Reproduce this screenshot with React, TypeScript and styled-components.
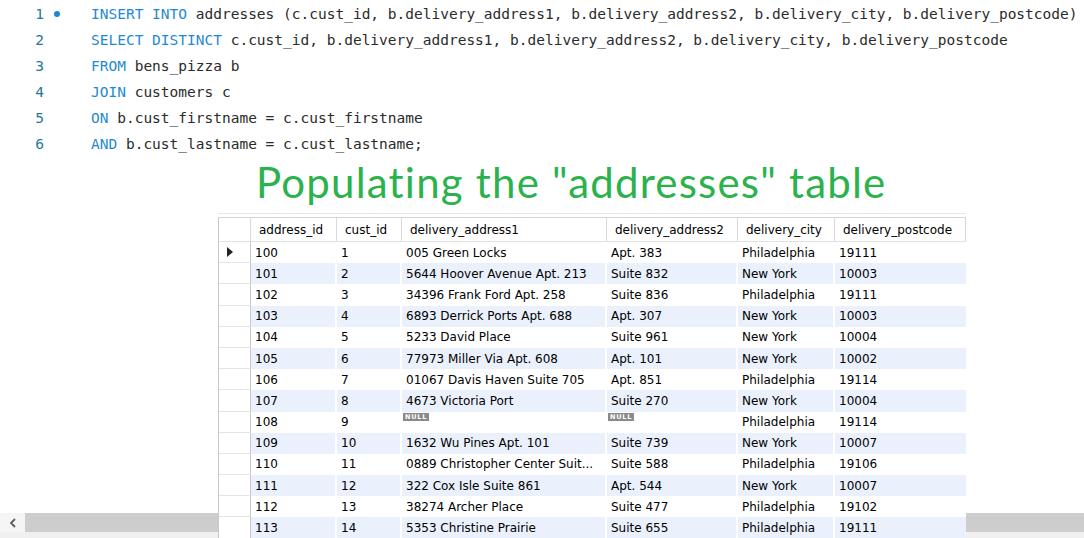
import styled, { createGlobalStyle } from 'styled-components';

const GlobalStyle = createGlobalStyle`
  html, body {
    margin: 0;
    padding: 0;
    background: #fff;
    overflow: hidden;
  }
`;

const COLS = '32px 86px 65px 205px 131px 97px 132px';

const Editor = styled('div')`
  position: relative;
  width: 1084px;
  height: 538px;
  overflow: hidden;
  background: #fff;
`;

const Code = styled('div')`
  padding-top: 1px;
  font-family: 'DejaVu Sans Mono', 'Liberation Mono', monospace;
  font-size: 14.5px;
  color: #2b2b2b;
`;

const Line = styled('div')`
  display: grid;
  grid-template-columns: 44px 47px 1fr;
  align-items: center;
  height: 26px;
  white-space: pre;
`;

const LineNo = styled('span')`
  text-align: right;
  color: #237893;
`;

const Gutter = styled('span')`
  display: flex;
  align-items: center;
  padding-left: 10px;
`;

const Dot = styled('span')`
  width: 6px;
  height: 6px;
  border-radius: 50%;
  background: #1b85d8;
`;

const Kw = styled('span')`
  color: #1f8ad2;
`;

const Title = styled('h1')`
  margin: 0 0 0 256px;
  height: 56px;
  font-family: Lato, 'Open Sans', sans-serif;
  font-weight: 400;
  font-size: 42px;
  letter-spacing: 1.2px;
  line-height: 50px;
  color: #2bb24c;
`;

const Grid = styled('div')`
  position: relative;
  z-index: 1;
  margin-left: 218px;
  width: 748px;
  border-top: 1px solid #e6e6e6;
  padding-top: 3px;
  background: #fff;
  font-family: 'DejaVu Sans', Verdana, sans-serif;
  font-size: 12px;
  color: #000;
`;

const HeaderRow = styled('div')`
  display: grid;
  grid-template-columns: ${COLS};
  height: 25px;
  border-top: 1px solid #d6d6d6;
  border-bottom: 1px solid #e2e2e2;
  border-left: 1px solid #c8c8c8;
  border-right: 1px solid #d6d6d6;
  box-sizing: border-box;
`;

const HeadCell = styled('div')`
  display: flex;
  align-items: center;
  padding-left: 8px;
  border-right: 1px solid #dadada;
  white-space: nowrap;
  &:last-child {
    border-right: none;
  }
`;

const Row = styled('div')<{ $alt: boolean }>`
  display: grid;
  grid-template-columns: ${COLS};
  height: 21.2px;
  border-left: 1px solid #c8c8c8;
  box-sizing: border-box;
  background: ${(p) => (p.$alt ? '#eaf1fc' : '#fff')};
`;

const Selector = styled('div')`
  display: flex;
  align-items: center;
  padding-left: 8px;
  background: #fff;
  border-right: 1px solid #c8c8c8;
  border-bottom: 1px solid #e4e4e4;
`;

const Arrow = styled('span')`
  width: 0;
  height: 0;
  border-top: 5px solid transparent;
  border-bottom: 5px solid transparent;
  border-left: 6px solid #222;
`;

const Cell = styled('div')<{ $top?: boolean }>`
  display: flex;
  align-items: ${(p) => (p.$top ? 'flex-start' : 'center')};
  padding: ${(p) => (p.$top ? '1px 0 0 1px' : '0 0 0 4px')};
  border-right: 2px solid #fff;
  white-space: nowrap;
  overflow: hidden;
  &:last-child {
    border-right: none;
  }
`;

const NullTag = styled('span')`
  display: inline-block;
  padding: 0 2px;
  height: 8px;
  line-height: 8px;
  background: #8a8a8a;
  color: #fff;
  font-family: 'DejaVu Sans', sans-serif;
  font-size: 6.5px;
  font-weight: 700;
  letter-spacing: 0.8px;
`;

const Scrollbar = styled('div')`
  position: absolute;
  left: 0;
  right: 0;
  top: 513px;
  height: 25px;
  background: #f0f0f0;
  display: flex;
  align-items: flex-start;
`;

const ScrollBtn = styled('div')`
  width: 25px;
  height: 19px;
  display: flex;
  align-items: center;
  justify-content: center;
  background: #f5f5f5;
`;

const Thumb = styled('div')`
  flex: 1;
  height: 19px;
  background: #cdcdcd;
`;

const kwLines: [string, string][] = [
  ['INSERT INTO', ' addresses (c.cust_id, b.delivery_address1, b.delivery_address2, b.delivery_city, b.delivery_postcode)'],
  ['SELECT DISTINCT', ' c.cust_id, b.delivery_address1, b.delivery_address2, b.delivery_city, b.delivery_postcode'],
  ['FROM', ' bens_pizza b'],
  ['JOIN', ' customers c'],
  ['ON', ' b.cust_firstname = c.cust_firstname'],
  ['AND', ' b.cust_lastname = c.cust_lastname;'],
];

const headers = [
  'address_id',
  'cust_id',
  'delivery_address1',
  'delivery_address2',
  'delivery_city',
  'delivery_postcode',
];

const rows: (string | null)[][] = [
  ['100', '1', '005 Green Locks', 'Apt. 383', 'Philadelphia', '19111'],
  ['101', '2', '5644 Hoover Avenue Apt. 213', 'Suite 832', 'New York', '10003'],
  ['102', '3', '34396 Frank Ford Apt. 258', 'Suite 836', 'Philadelphia', '19111'],
  ['103', '4', '6893 Derrick Ports Apt. 688', 'Apt. 307', 'New York', '10003'],
  ['104', '5', '5233 David Place', 'Suite 961', 'New York', '10004'],
  ['105', '6', '77973 Miller Via Apt. 608', 'Apt. 101', 'New York', '10002'],
  ['106', '7', '01067 Davis Haven Suite 705', 'Apt. 851', 'Philadelphia', '19114'],
  ['107', '8', '4673 Victoria Port', 'Suite 270', 'New York', '10004'],
  ['108', '9', null, null, 'Philadelphia', '19114'],
  ['109', '10', '1632 Wu Pines Apt. 101', 'Suite 739', 'New York', '10007'],
  ['110', '11', '0889 Christopher Center Suit...', 'Suite 588', 'Philadelphia', '19106'],
  ['111', '12', '322 Cox Isle Suite 861', 'Apt. 544', 'New York', '10007'],
  ['112', '13', '38274 Archer Place', 'Suite 477', 'Philadelphia', '19102'],
  ['113', '14', '5353 Christine Prairie', 'Suite 655', 'Philadelphia', '19111'],
];

const App = () => {
  return (
    <Editor>
      <GlobalStyle />
      <Code>
        {kwLines.map(([kw, rest], i) => (
          <Line key={i}>
            <LineNo>{i + 1}</LineNo>
            <Gutter>{i === 0 && <Dot />}</Gutter>
            <span>
              <Kw>{kw}</Kw>
              {rest}
            </span>
          </Line>
        ))}
      </Code>
      <Title>Populating the "addresses" table</Title>
      <Grid>
        <HeaderRow>
          <HeadCell />
          {headers.map((h) => (
            <HeadCell key={h}>{h}</HeadCell>
          ))}
        </HeaderRow>
        {rows.map((row, i) => (
          <Row key={row[0]} $alt={i % 2 === 1}>
            <Selector>{i === 0 && <Arrow />}</Selector>
            {row.map((v, j) =>
              v === null ? (
                <Cell key={j} $top>
                  <NullTag>NULL</NullTag>
                </Cell>
              ) : (
                <Cell key={j}>{v}</Cell>
              )
            )}
          </Row>
        ))}
      </Grid>
      <Scrollbar>
        <ScrollBtn>
          <svg width="8" height="10" viewBox="0 0 8 10">
            <path d="M6 1 L2 5 L6 9" fill="none" stroke="#5f5f5f" strokeWidth="1.8" />
          </svg>
        </ScrollBtn>
        <Thumb />
      </Scrollbar>
    </Editor>
  );
};

export default App;
